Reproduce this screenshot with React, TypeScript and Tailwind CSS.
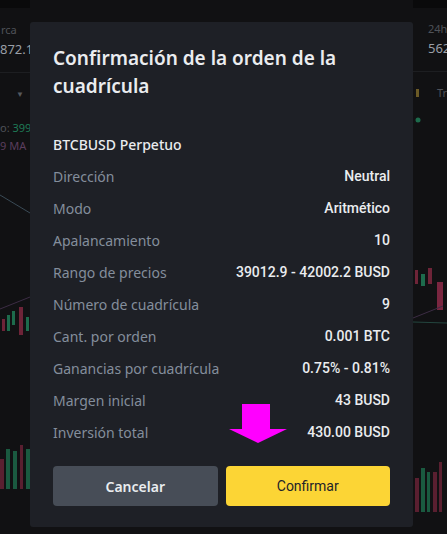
const rows: [string, string][] = [
  ["Dirección", "Neutral"],
  ["Modo", "Aritmético"],
  ["Apalancamiento", "10"],
  ["Rango de precios", "39012.9 - 42002.2 BUSD"],
  ["Número de cuadrícula", "9"],
  ["Cant. por orden", "0.001 BTC"],
  ["Ganancias por cuadrícula", "0.75% - 0.81%"],
  ["Margen inicial", "43 BUSD"],
  ["Inversión total", "430.00 BUSD"],
];

function LeftStrip() {
  return (
    <div className="w-[30px] shrink-0 flex flex-col text-[11px] leading-none overflow-hidden whitespace-nowrap">
      <div className="h-[8px] bg-[#0a0a0b]" />
      <div className="mt-[16px] text-[#4f5258] pl-[1px]">rca</div>
      <div className="mt-[8px] text-[13px] text-[#9a9fa6]">872.1</div>
      <div className="mt-[16px] h-px bg-[#1d1e21]" />
      <div className="mt-[17px] pl-[16px] text-[8px] text-[#56595e]">▼</div>
      <div className="mt-[24px] text-[#4f5258]">
        o: <span className="text-[#1f7a56]">399</span>
      </div>
      <div className="mt-[7px] text-[#5b3d5d]">9 MA</div>
      <svg width="30" height="340" className="mt-[8px]">
        <path d="M0 36 L30 54" stroke="#3a4a56" strokeWidth="1" fill="none" />
        <path d="M0 150 L30 138" stroke="#3c2d45" strokeWidth="1" fill="none" />
        <rect x="2" y="160" width="3" height="12" fill="#6e2438" />
        <rect x="7" y="156" width="3" height="16" fill="#1d6b4c" />
        <rect x="12" y="152" width="3" height="14" fill="#1d6b4c" />
        <rect x="19" y="148" width="4" height="28" fill="#6e2438" />
        <rect x="26" y="158" width="3" height="14" fill="#1d6b4c" />
        <rect x="0" y="300" width="4" height="30" fill="#5a1f30" />
        <rect x="6" y="290" width="4" height="40" fill="#1a5a40" />
        <rect x="13" y="292" width="4" height="38" fill="#1a5a40" />
        <rect x="20" y="286" width="3" height="44" fill="#5a1f30" />
        <rect x="26" y="290" width="4" height="40" fill="#1a5a40" />
      </svg>
    </div>
  );
}

function RightStrip() {
  return (
    <div className="flex-1 flex flex-col text-[11px] leading-none overflow-hidden whitespace-nowrap">
      <div className="h-[8px] bg-[#0a0a0b]" />
      <div className="mt-[15px] pl-[15px] text-[#4f5258]">24h</div>
      <div className="mt-[8px] pl-[15px] text-[13px] text-[#9a9fa6]">562</div>
      <div className="mt-[16px] h-px bg-[#1d1e21]" />
      <div className="mt-[15px] flex items-center gap-[18px] pl-[3px]">
        <div className="w-[4px] h-[8px] bg-[#6b5a26]" />
        <span className="text-[#4f5258]">Tr</span>
      </div>
      <svg width="34" height="420" className="mt-[12px]">
        <circle cx="5" cy="10" r="2.5" fill="#1d6b4c" />
        <rect x="2" y="160" width="3" height="14" fill="#6e2438" />
        <rect x="8" y="164" width="4" height="12" fill="#1d6b4c" />
        <rect x="15" y="158" width="4" height="16" fill="#6e2438" />
        <rect x="24" y="172" width="6" height="28" fill="#7a2640" />
        <path d="M0 208 L30 196" stroke="#3c2d45" strokeWidth="1" fill="none" />
        <path d="M0 212 L34 213" stroke="#24463f" strokeWidth="1" fill="none" />
        <rect x="2" y="368" width="4" height="34" fill="#5a1f30" />
        <rect x="8" y="358" width="4" height="44" fill="#1a5a40" />
        <rect x="14" y="362" width="3" height="40" fill="#1a5a40" />
        <rect x="20" y="362" width="4" height="40" fill="#5a1f30" />
        <rect x="26" y="352" width="3" height="50" fill="#5a1f30" />
      </svg>
    </div>
  );
}

export default function App() {
  return (
    <div
      className="relative w-[447px] h-[534px] bg-[#111113] overflow-hidden flex"
      style={{ fontFamily: '"Noto Sans", "Open Sans", sans-serif' }}
    >
      <LeftStrip />
      <div className="w-[383px] shrink-0 bg-[#111113]" />
      <RightStrip />

      {/* Modal */}
      <div className="absolute left-[30px] top-[22px] w-[383px] h-[505px] bg-[#1e2026] rounded-[3px] px-[23px] pt-[22px] flex flex-col">
        <h2 className="text-[19px] leading-[28px] font-semibold text-[#eaecef] pr-[6px]">
          Confirmación de la orden de la cuadrícula
        </h2>
        <div className="mt-[28px] h-[32px] flex items-center text-[14px] font-medium text-[#eaecef]">
          BTCBUSD Perpetuo
        </div>
        {rows.map(([label, value]) => (
          <div key={label} className="h-[32px] flex items-center justify-between text-[14px]">
            <span className="text-[#848e9c]">{label}</span>
            <span
              className="text-[#eaecef] font-medium"
              style={{ fontFamily: "Roboto, sans-serif" }}
            >
              {value}
            </span>
          </div>
        ))}
        <div className="mt-[18px] flex gap-[8px]">
          <button className="flex-1 h-[40px] rounded-[4px] bg-[#474d57] text-[#eaecef] text-[14px] font-semibold">
            Cancelar
          </button>
          <button
            className="flex-1 h-[40px] rounded-[4px] bg-[#fcd535] text-[#1e2329] text-[14px] font-normal"
            style={{ fontFamily: "Roboto, sans-serif" }}
          >
            Confirmar
          </button>
        </div>
      </div>

      {/* Magenta arrow annotation */}
      <svg className="absolute left-[229px] top-[404px]" width="58" height="40" viewBox="0 0 58 40">
        <polygon points="13,0 41,0 41,25 58,25 29,39 0,25 13,25" fill="#ff00ff" />
      </svg>
    </div>
  );
}
